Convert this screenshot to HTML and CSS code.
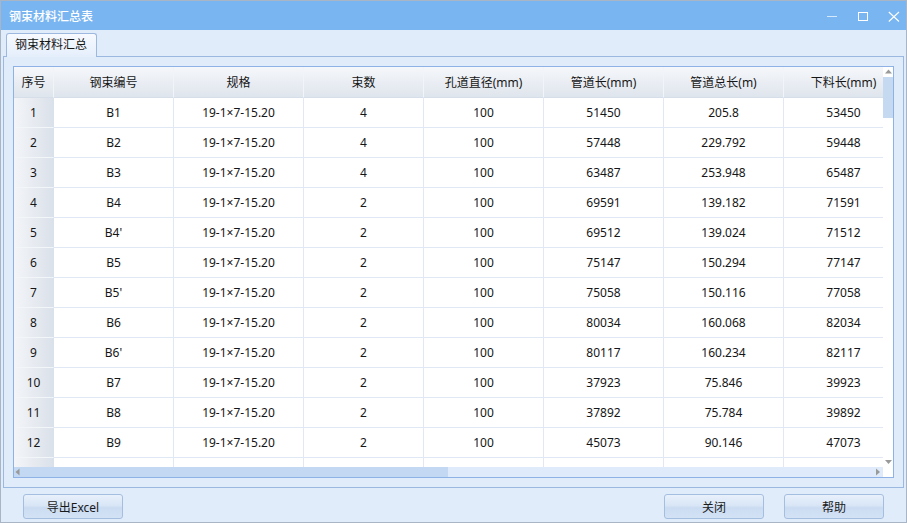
FILE: index.html
```html
<!DOCTYPE html>
<html lang="zh-CN">
<head>
<meta charset="utf-8">
<title>钢束材料汇总表</title>
<link rel="stylesheet" href="styles.css">
</head>
<body>
<div class="window">
  <div class="titlebar">
    <span class="title">钢束材料汇总表</span>
    <div class="controls">
      <svg class="ctl" width="12" height="12" viewBox="0 0 12 12"><line x1="1" y1="6.5" x2="11" y2="6.5" stroke="#d6e8fb" stroke-width="1"/></svg>
      <svg class="ctl" width="12" height="12" viewBox="0 0 12 12"><rect x="1.5" y="2.5" width="9" height="8" fill="none" stroke="#ffffff" stroke-width="1"/></svg>
      <svg class="ctl" width="12" height="12" viewBox="0 0 12 12"><path d="M0.8 2 L11 11.5 M11 2 L0.8 11.5" stroke="#ffffff" stroke-width="1.1" fill="none"/></svg>
    </div>
  </div>
  <div class="client">
    <div class="tabs"><div class="tab">钢束材料汇总</div></div>
    <div class="panel">
      <div class="grid">
        <div class="grid-main">
          <div class="viewport">
            <div class="table">
              <div class="hcell rh">序号</div><div class="hcell">钢束编号</div><div class="hcell">规格</div><div class="hcell">束数</div><div class="hcell">孔道直径(mm)</div><div class="hcell">管道长(mm)</div><div class="hcell">管道总长(m)</div><div class="hcell">下料长(mm)</div>

              <div class="cell rh">1</div><div class="cell">B1</div><div class="cell">19-1×7-15.20</div><div class="cell">4</div><div class="cell">100</div><div class="cell">51450</div><div class="cell">205.8</div><div class="cell">53450</div>
              <div class="cell rh">2</div><div class="cell">B2</div><div class="cell">19-1×7-15.20</div><div class="cell">4</div><div class="cell">100</div><div class="cell">57448</div><div class="cell">229.792</div><div class="cell">59448</div>
              <div class="cell rh">3</div><div class="cell">B3</div><div class="cell">19-1×7-15.20</div><div class="cell">4</div><div class="cell">100</div><div class="cell">63487</div><div class="cell">253.948</div><div class="cell">65487</div>
              <div class="cell rh">4</div><div class="cell">B4</div><div class="cell">19-1×7-15.20</div><div class="cell">2</div><div class="cell">100</div><div class="cell">69591</div><div class="cell">139.182</div><div class="cell">71591</div>
              <div class="cell rh">5</div><div class="cell">B4'</div><div class="cell">19-1×7-15.20</div><div class="cell">2</div><div class="cell">100</div><div class="cell">69512</div><div class="cell">139.024</div><div class="cell">71512</div>
              <div class="cell rh">6</div><div class="cell">B5</div><div class="cell">19-1×7-15.20</div><div class="cell">2</div><div class="cell">100</div><div class="cell">75147</div><div class="cell">150.294</div><div class="cell">77147</div>
              <div class="cell rh">7</div><div class="cell">B5'</div><div class="cell">19-1×7-15.20</div><div class="cell">2</div><div class="cell">100</div><div class="cell">75058</div><div class="cell">150.116</div><div class="cell">77058</div>
              <div class="cell rh">8</div><div class="cell">B6</div><div class="cell">19-1×7-15.20</div><div class="cell">2</div><div class="cell">100</div><div class="cell">80034</div><div class="cell">160.068</div><div class="cell">82034</div>
              <div class="cell rh">9</div><div class="cell">B6'</div><div class="cell">19-1×7-15.20</div><div class="cell">2</div><div class="cell">100</div><div class="cell">80117</div><div class="cell">160.234</div><div class="cell">82117</div>
              <div class="cell rh">10</div><div class="cell">B7</div><div class="cell">19-1×7-15.20</div><div class="cell">2</div><div class="cell">100</div><div class="cell">37923</div><div class="cell">75.846</div><div class="cell">39923</div>
              <div class="cell rh">11</div><div class="cell">B8</div><div class="cell">19-1×7-15.20</div><div class="cell">2</div><div class="cell">100</div><div class="cell">37892</div><div class="cell">75.784</div><div class="cell">39892</div>
              <div class="cell rh">12</div><div class="cell">B9</div><div class="cell">19-1×7-15.20</div><div class="cell">2</div><div class="cell">100</div><div class="cell">45073</div><div class="cell">90.146</div><div class="cell">47073</div>
              <div class="cell rh"></div><div class="cell"></div><div class="cell"></div><div class="cell"></div><div class="cell"></div><div class="cell"></div><div class="cell"></div><div class="cell"></div>
            </div>
          </div>
          <div class="vscroll">
            <div class="vs-btn"><svg width="10" height="10" viewBox="0 0 10 10"><polygon points="2,6.5 9,6.5 5.5,2.5" fill="#9a9a9a"/></svg></div>
            <div class="vs-thumb"></div>
            <div class="vs-track"></div>
            <div class="vs-btn"><svg width="10" height="10" viewBox="0 0 10 10"><polygon points="2,3 9,3 5.5,7" fill="#9a9a9a"/></svg></div>
          </div>
        </div>
        <div class="hscroll">
          <div class="hs-bar">
            <div class="hs-thumb"><svg width="8" height="10" viewBox="0 0 8 10"><polygon points="5.5,1.5 5.5,8.5 1.5,5" fill="#9a9a9a"/></svg></div>
            <div class="hs-track"><svg width="8" height="10" viewBox="0 0 8 10"><polygon points="2,1.5 2,8.5 6,5" fill="#9a9a9a"/></svg></div>
          </div>
          <div class="corner"></div>
        </div>
      </div>
    </div>
    <div class="footer">
      <div class="btn">导出Excel</div>
      <div class="spacer"></div>
      <div class="btn">关闭</div>
      <div class="btn">帮助</div>
    </div>
  </div>
</div>
</body>
</html>
```

FILE: styles.css
```css
* { box-sizing: border-box; }
body {
  margin: 0;
  font-family: "Noto Sans", "Noto Sans CJK SC", sans-serif;
  font-size: 12px;
  color: #161616;
}
.window {
  width: 907px;
  height: 523px;
  border: 1px solid #a9b5c4;
  background: #e1ecfa;
  display: flex;
  flex-direction: column;
}
.titlebar {
  flex: none;
  height: 29px;
  background: #78b5f1;
  display: flex;
  align-items: center;
  padding-left: 8px;
  color: #ffffff;
}
.title { flex: 1; font-size: 12px; font-weight: 500; }
.controls {
  display: flex;
  align-items: center;
  gap: 19px;
  padding-right: 6px;
}
.ctl { display: block; }
.client {
  flex: 1;
  display: flex;
  flex-direction: column;
  padding: 3px 2px 0;
}
.tabs {
  display: flex;
  padding-left: 3px;
}
.tab {
  width: 91px;
  height: 24px;
  border: 1px solid #9cb8df;
  border-bottom: none;
  border-radius: 3px 3px 0 0;
  background: linear-gradient(#f7faff, #e4eefb);
  padding-left: 8px;
  line-height: 22px;
  margin-bottom: -1px;
  position: relative;
  z-index: 1;
}
.panel {
  height: 432px;
  border: 1px solid #9bb8e0;
  padding: 9px;
}
.grid {
  width: 881px;
  height: 412px;
  border: 1px solid #8fb2e6;
  background: #ffffff;
  display: flex;
  flex-direction: column;
}
.grid-main {
  display: flex;
  height: 400px;
}
.viewport {
  width: 869px;
  height: 400px;
  overflow: hidden;
}
.table {
  display: grid;
  grid-template-columns: 40px 120px 130px 120px 120px 120px 120px 120px;
  width: 890px;
}
.cell, .hcell {
  display: flex;
  align-items: center;
  justify-content: center;
  white-space: nowrap;
}
.cell {
  height: 30px;
  border-right: 1px solid #dfe8f4;
  border-bottom: 1px solid #dfe8f4;
}
.hcell {
  height: 31px;
  background: linear-gradient(#f5f7fa, #dfe5ed);
  border-right: 1px solid #f1f4f8;
  border-bottom: 1px solid #d6dee9;
}
.cell.rh {
  background: linear-gradient(to right, #f3f5f8, #dbe1ea);
  border-right: 1px solid #d9e1eb;
  border-bottom: 1px solid #f3f6f9;
}
.hcell.rh {
  border-right: 1px solid #f1f4f8;
}
.vscroll {
  width: 10px;
  display: flex;
  flex-direction: column;
  background: #ffffff;
}
.vs-btn { height: 10px; flex: none; }
.vs-btn svg { display: block; }
.vs-thumb { height: 41px; background: #c5d9f1; flex: none; }
.vs-track { flex: 1; }
.hscroll {
  height: 10px;
  display: flex;
}
.hs-bar {
  width: 869px;
  display: flex;
  background: #dfeafa;
}
.hs-thumb {
  width: 434px;
  background: #c3d8f2;
}
.hs-track {
  flex: 1;
  display: flex;
  justify-content: flex-end;
  padding-right: 1px;
}
.hs-thumb svg, .hs-track svg { display: block; }
.corner { width: 10px; background: #ffffff; }
.footer {
  display: flex;
  gap: 20px;
  padding: 6px 20px 0;
}
.spacer { flex: 1; }
.btn {
  width: 100px;
  height: 25px;
  border: 1px solid #a4bedf;
  border-radius: 3px;
  background: linear-gradient(#e8f0fb 0%, #d9e6f6 45%, #cbdcf2 55%, #d3e2f5 100%);
  display: flex;
  align-items: center;
  justify-content: center;
  color: #1a1a1a;
}
```
